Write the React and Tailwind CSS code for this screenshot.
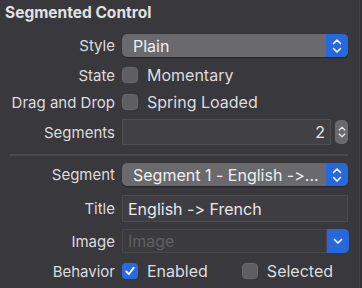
import React from 'react';

function UpDown({ className = '' }) {
  return (
    <svg className={className} width="10" height="16" viewBox="0 0 10 16" fill="none" stroke="currentColor" strokeWidth="1.6" strokeLinecap="round" strokeLinejoin="round">
      <path d="M1.5 5.5L5 2l3.5 3.5" />
      <path d="M1.5 10.5L5 14l3.5-3.5" />
    </svg>
  );
}

function Label({ children }) {
  return <div className="w-[115px] shrink-0 text-right text-[15px] text-[#dddcdf] leading-none">{children}</div>;
}

function Row({ label, className = '', children }) {
  return (
    <div className={`flex items-center gap-[7px] ${className}`}>
      <Label>{label}</Label>
      <div className="flex-1 flex items-center min-w-0">{children}</div>
    </div>
  );
}

function Popup({ text }) {
  return (
    <div className="flex w-[226px] h-[23px] rounded-[5px] overflow-hidden bg-[#6a696e] shadow-[0_0.5px_1px_rgba(0,0,0,0.4)]">
      <div className="flex-1 min-w-0 pl-[11px] flex items-center text-[16px] text-[#f0f0f2] whitespace-nowrap leading-none">
        {text}
      </div>
      <div className="w-[22px] shrink-0 bg-[#2768dd] flex items-center justify-center text-white">
        <UpDown />
      </div>
    </div>
  );
}

function Check({ checked }) {
  if (checked) {
    return (
      <div className="w-[16px] h-[16px] rounded-[4px] bg-[#2a6ae0] flex items-center justify-center">
        <svg width="12" height="12" viewBox="0 0 12 12" fill="none" stroke="white" strokeWidth="1.8" strokeLinecap="round" strokeLinejoin="round">
          <path d="M2.2 6.4L4.8 9.2 9.8 2.6" />
        </svg>
      </div>
    );
  }
  return <div className="w-[16px] h-[16px] rounded-[4px] bg-[#5f5e63] border border-[#68676c]" />;
}

function CheckText({ children }) {
  return <span className="ml-[9px] text-[16px] text-[#dddcdf] leading-none">{children}</span>;
}

export default function App() {
  return (
    <div className="w-[362px] h-[288px] bg-[#39383d] flex overflow-hidden font-['Inter','Noto_Sans',sans-serif] [font-feature-settings:'calt'_0]">
      <div className="flex-1 flex flex-col">
        <div className="pl-[5px] pt-[5px] h-[34px] text-[15.5px] font-bold text-[#e2e1e4] leading-none">Segmented Control</div>

        <Row label="Style" className="h-[23px]">
          <Popup text="Plain" />
        </Row>

        <Row label="State" className="h-[16px] mt-[10px]">
          <Check />
          <CheckText>Momentary</CheckText>
        </Row>

        <Row label="Drag and Drop" className="h-[16px] mt-[11px]">
          <Check />
          <CheckText>Spring Loaded</CheckText>
        </Row>

        <Row label="Segments" className="h-[26px] mt-[9px]">
          <div className="w-[209px] h-[26px] bg-[#414045] border border-[#4f4e53] flex items-center justify-end pr-[5px] text-[16px] text-[#e8e7ea] leading-none">2</div>
          <div className="ml-[4px] w-[13px] h-[24px] rounded-[5px] bg-[#6a696e] flex items-center justify-center text-[#e6e6e8]">
            <UpDown className="w-[8px] h-[14px]" />
          </div>
        </Row>

        <div className="ml-[9px] w-[339px] h-[2px] bg-[#4a494e] mt-[9px]" />

        <Row label="Segment" className="h-[23px] mt-[7px]">
          <Popup text="Segment 1 - English ->..." />
        </Row>

        <Row label="Title" className="h-[27px] mt-[9px]">
          <div className="w-[226px] h-[27px] bg-[#3e3d42] border border-[#4c4b50] flex items-center pl-[5px] text-[16px] text-[#e8e7ea] leading-none">English -&gt; French</div>
        </Row>

        <Row label="Image" className="h-[24px] mt-[7px]">
          <div className="flex w-[227px] h-[24px]">
            <div className="flex-1 bg-[#3b3a3f] border border-[#48474c] flex items-center pl-[5px] text-[16px] text-[#605f64] leading-none">Image</div>
            <div className="w-[22px] rounded-r-[5px] bg-[#2768dd] flex items-center justify-center text-white">
              <svg width="10" height="8" viewBox="0 0 10 8" fill="none" stroke="currentColor" strokeWidth="1.7" strokeLinecap="round" strokeLinejoin="round">
                <path d="M1.5 2.5L5 6l3.5-3.5" />
              </svg>
            </div>
          </div>
        </Row>

        <Row label="Behavior" className="h-[16px] mt-[10px]">
          <Check checked />
          <CheckText>Enabled</CheckText>
          <div className="ml-[34px]"><Check /></div>
          <CheckText>Selected</CheckText>
        </Row>
      </div>
      <div className="w-[3px] bg-[#323136] border-l border-[#444348]" />
    </div>
  );
}
